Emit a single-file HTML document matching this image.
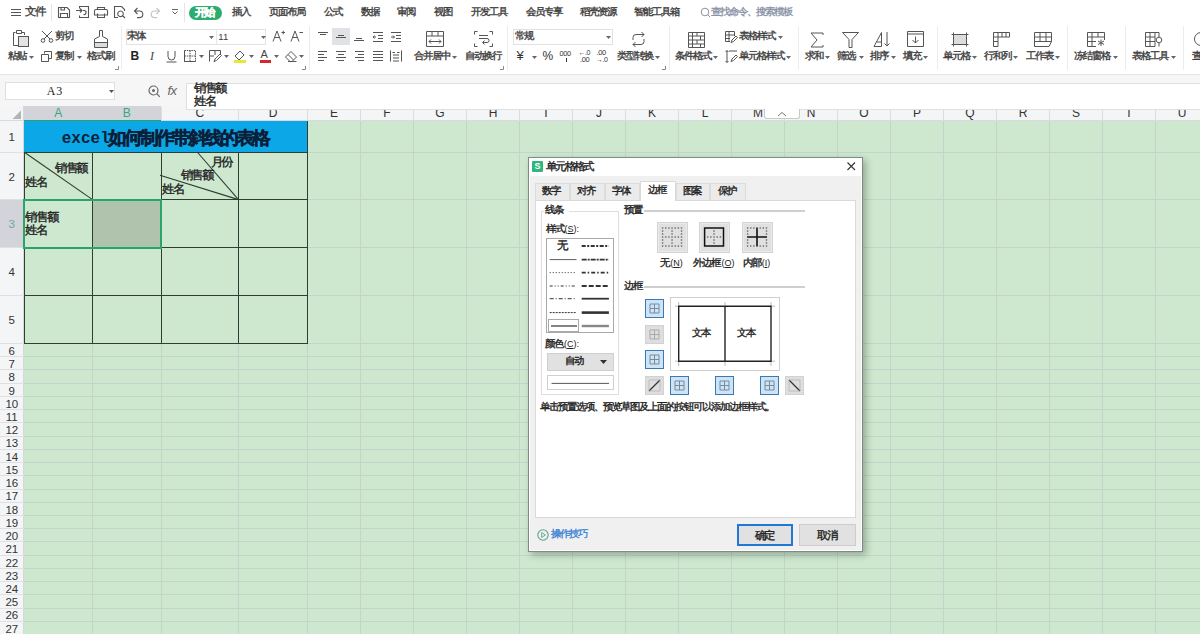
<!DOCTYPE html>
<html><head><meta charset="utf-8"><style>
html,body{margin:0;padding:0;}
body{width:1200px;height:634px;position:relative;overflow:hidden;background:#fff;font-family:"Liberation Sans",sans-serif;}
.a{position:absolute;}
.t{position:absolute;white-space:nowrap;}
svg.a{overflow:visible;}
.c{display:inline-block;width:1em;text-align:center;font-style:normal;-webkit-text-stroke:0.3px currentColor;transform:scale(1.2,1.15);font-family:"Liberation Sans",sans-serif;}
</style></head><body>
<div class="a" style="left:0px;top:0px;width:1200px;height:74px;background:#fff"></div>
<div class="a" style="left:11px;top:9px;width:10px;height:1.2px;background:#555"></div>
<div class="a" style="left:11px;top:12px;width:10px;height:1.2px;background:#555"></div>
<div class="a" style="left:11px;top:15px;width:10px;height:1.2px;background:#555"></div>
<div class="t" style="left:26px;top:6.33px;font-size:9.5px;line-height:12.35px;color:#3c3c3c;"><i class="c">文</i><i class="c">件</i></div>
<div class="a" style="left:50.5px;top:4px;width:1px;height:17px;background:#e4e4e4"></div>
<svg class="a" style="left:57px;top:6px;" width="14" height="13" viewBox="0 0 14 13" fill="none" stroke="#444" stroke-width="1"><path d="M1.5 1.5H10L12.5 4V11.5H1.5Z M3.5 11.5V7.5H10.5V11.5 M4 1.5V4H7.5V1.5" stroke="#555" stroke-width="1.1"/></svg>
<svg class="a" style="left:75px;top:5px;" width="15" height="14" viewBox="0 0 15 14" fill="none" stroke="#444" stroke-width="1"><path d="M4.5 3.5V1.5H13.5V12.5H4.5V10.5 M1 5.5H7 M5 3.5L7 5.5L5 7.5 M8.5 9.5a2 2 0 1 0 1-4H8" stroke="#555" stroke-width="1.1"/></svg>
<svg class="a" style="left:94px;top:6px;" width="14" height="13" viewBox="0 0 14 13" fill="none" stroke="#444" stroke-width="1"><path d="M3.5 3.5V1.5H10.5V3.5 M2 3.5H12a1.5 1.5 0 0 1 1.5 1.5V9H0.5V5A1.5 1.5 0 0 1 2 3.5Z M3.5 7.5V11.5H10.5V7.5" stroke="#555" stroke-width="1.1"/></svg>
<svg class="a" style="left:113px;top:5px;" width="14" height="14" viewBox="0 0 14 14" fill="none" stroke="#444" stroke-width="1"><path d="M8.5 1.5H1.5V12.5H5 M8.5 1.5L11.5 4.5V6 M7.5 6a2.8 2.8 0 1 0 0.01 0Z M9.5 10.5L12 13" stroke="#555" stroke-width="1.1"/></svg>
<svg class="a" style="left:131.5px;top:6px;" width="12" height="13" viewBox="0 0 12 13" fill="none" stroke="#444" stroke-width="1"><path d="M3 5H7.5a3.3 3.3 0 0 1 0 6.6H5 M5.5 2L2.5 5L5.5 8" stroke="#555" stroke-width="1.1"/></svg>
<svg class="a" style="left:150px;top:6px;" width="12" height="13" viewBox="0 0 12 13" fill="none" stroke="#444" stroke-width="1"><path d="M9 5H4.5a3.3 3.3 0 0 0 0 6.6H7 M6.5 2L9.5 5L6.5 8" stroke="#c4c4c4" stroke-width="1.1"/></svg>
<svg class="a" style="left:171px;top:8px;" width="8" height="8" viewBox="0 0 8 8" fill="none" stroke="#444" stroke-width="1"><path d="M1 1.5H7 M1.5 3.5L4 6L6.5 3.5" stroke="#666"/></svg>
<div class="a" style="left:184px;top:3px;width:1px;height:19px;background:#e4e4e4"></div>
<div class="a" style="left:188.5px;top:6.3px;width:33.5px;height:13.5px;background:#2bad70;border-radius:7px"></div>
<div class="t" style="left:145.20px;width:120px;text-align:center;top:6.83px;font-size:9.5px;line-height:12.35px;color:#fff;font-weight:bold"><i class="c">开</i><i class="c">始</i></div>
<div class="t" style="left:233px;top:7.15px;font-size:9px;line-height:11.7px;color:#3c3c3c;"><i class="c">插</i><i class="c">入</i></div>
<div class="t" style="left:270px;top:7.15px;font-size:9px;line-height:11.7px;color:#3c3c3c;"><i class="c">页</i><i class="c">面</i><i class="c">布</i><i class="c">局</i></div>
<div class="t" style="left:325px;top:7.15px;font-size:9px;line-height:11.7px;color:#3c3c3c;"><i class="c">公</i><i class="c">式</i></div>
<div class="t" style="left:361.5px;top:7.15px;font-size:9px;line-height:11.7px;color:#3c3c3c;"><i class="c">数</i><i class="c">据</i></div>
<div class="t" style="left:398px;top:7.15px;font-size:9px;line-height:11.7px;color:#3c3c3c;"><i class="c">审</i><i class="c">阅</i></div>
<div class="t" style="left:434.8px;top:7.15px;font-size:9px;line-height:11.7px;color:#3c3c3c;"><i class="c">视</i><i class="c">图</i></div>
<div class="t" style="left:471.7px;top:7.15px;font-size:9px;line-height:11.7px;color:#3c3c3c;"><i class="c">开</i><i class="c">发</i><i class="c">工</i><i class="c">具</i></div>
<div class="t" style="left:526.5px;top:7.15px;font-size:9px;line-height:11.7px;color:#3c3c3c;"><i class="c">会</i><i class="c">员</i><i class="c">专</i><i class="c">享</i></div>
<div class="t" style="left:580.5px;top:7.15px;font-size:9px;line-height:11.7px;color:#3c3c3c;"><i class="c">稻</i><i class="c">壳</i><i class="c">资</i><i class="c">源</i></div>
<div class="t" style="left:635.3px;top:7.15px;font-size:9px;line-height:11.7px;color:#3c3c3c;"><i class="c">智</i><i class="c">能</i><i class="c">工</i><i class="c">具</i><i class="c">箱</i></div>
<svg class="a" style="left:700px;top:7px;" width="11" height="12" viewBox="0 0 11 12" fill="none" stroke="#444" stroke-width="1"><circle cx="5" cy="5" r="3.8" stroke="#8a93a3"/><path d="M7.8 7.8L10 10" stroke="#8a93a3"/></svg>
<div class="t" style="left:711.6px;top:7.15px;font-size:9px;line-height:11.7px;color:#8a93a6;"><i class="c">查</i><i class="c">找</i><i class="c">命</i><i class="c">令</i><i class="c">、</i><i class="c">搜</i><i class="c">索</i><i class="c">模</i><i class="c">板</i></div>
<svg class="a" style="left:12px;top:29px;" width="19" height="19" viewBox="0 0 19 19" fill="none" stroke="#444" stroke-width="1"><path d="M3.5 3.5H1.5V16.5H6 M10 3.5H12.5V6 M4.5 1.5H9.5V4.5H4.5Z" stroke="#555"/><rect x="6.5" y="7.5" width="10" height="10" fill="#e3e3e3" stroke="#555"/></svg>
<div class="t" style="left:8.7px;top:51.45px;font-size:9px;line-height:11.7px;color:#3c3c3c;"><i class="c">粘</i><i class="c">贴</i></div>
<svg class="a" style="left:29px;top:55.5px" width="5" height="3" viewBox="0 0 5 3"><path d="M0 0H5L2.5 3Z" fill="#666"/></svg>
<svg class="a" style="left:40px;top:30px;" width="14" height="13" viewBox="0 0 14 13" fill="none" stroke="#444" stroke-width="1"><path d="M2 1L10 9 M12 1L4 9" stroke="#555"/><circle cx="3" cy="10.5" r="1.8" stroke="#555"/><circle cx="11" cy="10.5" r="1.8" stroke="#555"/></svg>
<div class="t" style="left:56px;top:31.45px;font-size:9px;line-height:11.7px;color:#3c3c3c;"><i class="c">剪</i><i class="c">切</i></div>
<svg class="a" style="left:40px;top:50px;" width="13" height="13" viewBox="0 0 13 13" fill="none" stroke="#444" stroke-width="1"><path d="M4.5 3.5V1.5H11.5V8.5H9 M1.5 4.5H8.5V11.5H1.5Z" stroke="#555"/></svg>
<div class="t" style="left:56px;top:51.15px;font-size:9px;line-height:11.7px;color:#3c3c3c;"><i class="c">复</i><i class="c">制</i></div>
<svg class="a" style="left:77px;top:55.5px" width="5" height="3" viewBox="0 0 5 3"><path d="M0 0H5L2.5 3Z" fill="#666"/></svg>
<svg class="a" style="left:93px;top:29px;" width="16" height="20" viewBox="0 0 16 20" fill="none" stroke="#444" stroke-width="1"><path d="M6.5 1.5H9.5V7.5L14.5 10V18.5H1.5V10L6.5 7.5Z" stroke="#555"/><rect x="2" y="13.5" width="12" height="4.5" fill="#dcdcdc" stroke="none"/><path d="M1.5 13.5H14.5" stroke="#555"/></svg>
<div class="t" style="left:88px;top:51.15px;font-size:9px;line-height:11.7px;color:#3c3c3c;"><i class="c">格</i><i class="c">式</i><i class="c">刷</i></div>
<svg class="a" style="left:115px;top:66px;" width="4" height="4" viewBox="0 0 4 4" fill="none" stroke="#444" stroke-width="1"><path d="M3.5 0V3.5H0" stroke="#888"/></svg>
<div class="a" style="left:121px;top:26px;width:1px;height:44px;background:#ececec"></div>
<div class="a" style="left:126.3px;top:28.7px;width:140px;height:16.6px;background:#fff;border:1px solid #e2e2e2;box-sizing:border-box"></div>
<div class="a" style="left:215.5px;top:29px;width:1px;height:16px;background:#e8e8e8"></div>
<div class="t" style="left:128.3px;top:31.15px;font-size:9px;line-height:11.7px;color:#3c3c3c;"><i class="c">宋</i><i class="c">体</i></div>
<svg class="a" style="left:209px;top:35.5px" width="5" height="3" viewBox="0 0 5 3"><path d="M0 0H5L2.5 3Z" fill="#666"/></svg>
<div class="t" style="left:218.3px;top:30.82px;font-size:9.5px;line-height:12.35px;color:#3c3c3c;">11</div>
<svg class="a" style="left:260.5px;top:35.5px" width="5" height="3" viewBox="0 0 5 3"><path d="M0 0H5L2.5 3Z" fill="#666"/></svg>
<svg class="a" style="left:272px;top:29px;" width="14" height="14" viewBox="0 0 14 14" fill="none" stroke="#444" stroke-width="1"><path d="M1 12.5L5 2L9 12.5 M2.5 8.5H7.5" stroke="#555"/><path d="M9.5 3.5H13 M11.25 1.75V5.25" stroke="#555"/></svg>
<svg class="a" style="left:290px;top:29px;" width="14" height="14" viewBox="0 0 14 14" fill="none" stroke="#444" stroke-width="1"><path d="M1 12.5L5 2L9 12.5 M2.5 8.5H7.5" stroke="#555"/><path d="M9.5 3.5H13" stroke="#555"/></svg>
<div class="t" style="left:130.5px;top:48.70px;font-size:12px;line-height:15.6px;color:#222;font-weight:bold">B</div>
<div class="t" style="left:150px;top:48.70px;font-size:12px;line-height:15.6px;color:#444;font-style:italic;font-family:'Liberation Serif',serif">I</div>
<svg class="a" style="left:165px;top:50px;" width="13" height="13" viewBox="0 0 13 13" fill="none" stroke="#444" stroke-width="1"><path d="M3 1V6.5a3.5 3.5 0 0 0 7 0V1 M1.5 12H11.5" stroke="#555"/></svg>
<svg class="a" style="left:183.5px;top:50px;" width="12" height="12" viewBox="0 0 12 12" fill="none" stroke="#444" stroke-width="1"><path d="M0.5 0.5H11.5V11.5H0.5Z M6 0.5V11.5 M0.5 6H11.5" stroke="#555" stroke-dasharray="1.5 0.8"/><path d="M0.5 11.5H11.5 M0.5 0.5V11.5" stroke="#555"/></svg>
<svg class="a" style="left:199px;top:54.5px" width="5" height="3" viewBox="0 0 5 3"><path d="M0 0H5L2.5 3Z" fill="#666"/></svg>
<svg class="a" style="left:208.5px;top:50px;" width="13" height="12" viewBox="0 0 13 12" fill="none" stroke="#444" stroke-width="1"><path d="M0.5 11.5V0.5H11.5V5 M0.5 6H5 M6 0.5V5" stroke="#555"/><path d="M5 11.5L6 9L11 4L12.5 5.5L7.5 10.5Z" stroke="#555"/></svg>
<svg class="a" style="left:224px;top:54.5px" width="5" height="3" viewBox="0 0 5 3"><path d="M0 0H5L2.5 3Z" fill="#666"/></svg>
<svg class="a" style="left:233px;top:49px;" width="14" height="15" viewBox="0 0 14 15" fill="none" stroke="#444" stroke-width="1"><path d="M2 7L7 2L11 6L6 11" stroke="#555"/><path d="M2 7L6 11" stroke="#555"/></svg>
<div class="a" style="left:234px;top:60px;width:12px;height:3px;background:#e8e63a"></div>
<svg class="a" style="left:249px;top:54.5px" width="5" height="3" viewBox="0 0 5 3"><path d="M0 0H5L2.5 3Z" fill="#666"/></svg>
<div class="t" style="left:260.5px;top:47.35px;font-size:11px;line-height:14.3px;color:#444;">A</div>
<div class="a" style="left:259.5px;top:60px;width:11px;height:2.5px;background:#d8262a"></div>
<svg class="a" style="left:274px;top:54.5px" width="5" height="3" viewBox="0 0 5 3"><path d="M0 0H5L2.5 3Z" fill="#666"/></svg>
<svg class="a" style="left:283.5px;top:50px;" width="14" height="12" viewBox="0 0 14 12" fill="none" stroke="#444" stroke-width="1"><path d="M1.5 7L7 1.5L12.5 7L8 11.5H6Z M4 4.5L9.5 10 M4 11.5H12.5" stroke="#555"/></svg>
<svg class="a" style="left:299px;top:54.5px" width="5" height="3" viewBox="0 0 5 3"><path d="M0 0H5L2.5 3Z" fill="#666"/></svg>
<svg class="a" style="left:302px;top:66px;" width="4" height="4" viewBox="0 0 4 4" fill="none" stroke="#444" stroke-width="1"><path d="M3.5 0V3.5H0" stroke="#888"/></svg>
<div class="a" style="left:309px;top:26px;width:1px;height:44px;background:#ececec"></div>
<div class="a" style="left:332px;top:28.3px;width:17.7px;height:17px;background:#e1e2e6"></div>
<svg class="a" style="left:316.5px;top:31px;" width="12" height="12" viewBox="0 0 12 12" fill="none" stroke="#444" stroke-width="1"><path d="M1 1.5H11" stroke="#555"/><path d="M3 3.5H9" stroke="#555"/></svg>
<svg class="a" style="left:334.8px;top:31px;" width="12" height="12" viewBox="0 0 12 12" fill="none" stroke="#444" stroke-width="1"><path d="M3 4.5H9" stroke="#555"/><path d="M1 6.5H11" stroke="#555"/></svg>
<svg class="a" style="left:353px;top:31px;" width="12" height="12" viewBox="0 0 12 12" fill="none" stroke="#444" stroke-width="1"><path d="M3 7.5H9" stroke="#555"/><path d="M1 9.5H11" stroke="#555"/></svg>
<svg class="a" style="left:371.5px;top:31px;" width="12" height="12" viewBox="0 0 12 12" fill="none" stroke="#444" stroke-width="1"><path d="M1 1.5H11 M6 4.5H11 M6 7.5H11 M1 10.5H11 M4 6H1 M2.5 4.5L1 6L2.5 7.5" stroke="#555"/></svg>
<svg class="a" style="left:390.3px;top:31px;" width="12" height="12" viewBox="0 0 12 12" fill="none" stroke="#444" stroke-width="1"><path d="M1 1.5H11 M6 4.5H11 M6 7.5H11 M1 10.5H11 M1 6H4.5 M3 4.5L4.5 6L3 7.5" stroke="#555"/></svg>
<svg class="a" style="left:316.5px;top:50px;" width="12" height="12" viewBox="0 0 12 12" fill="none" stroke="#444" stroke-width="1"><path d="M1 1.5H10" stroke="#555"/><path d="M1 4.5H7" stroke="#555"/><path d="M1 7.5H10" stroke="#555"/><path d="M1 10.5H7" stroke="#555"/></svg>
<svg class="a" style="left:334.8px;top:50px;" width="12" height="12" viewBox="0 0 12 12" fill="none" stroke="#444" stroke-width="1"><path d="M1 1.5H11" stroke="#555"/><path d="M3 4.5H9" stroke="#555"/><path d="M1 7.5H11" stroke="#555"/><path d="M3 10.5H9" stroke="#555"/></svg>
<svg class="a" style="left:353px;top:50px;" width="12" height="12" viewBox="0 0 12 12" fill="none" stroke="#444" stroke-width="1"><path d="M2 1.5H11" stroke="#555"/><path d="M5 4.5H11" stroke="#555"/><path d="M2 7.5H11" stroke="#555"/><path d="M5 10.5H11" stroke="#555"/></svg>
<svg class="a" style="left:371.5px;top:50px;" width="12" height="12" viewBox="0 0 12 12" fill="none" stroke="#444" stroke-width="1"><path d="M1 1.5H11" stroke="#555"/><path d="M1 4.5H11" stroke="#555"/><path d="M1 7.5H11" stroke="#555"/><path d="M1 10.5H11" stroke="#555"/></svg>
<svg class="a" style="left:390.3px;top:50px;" width="12" height="12" viewBox="0 0 12 12" fill="none" stroke="#444" stroke-width="1"><path d="M0.5 0.5V11.5 M11.5 0.5V11.5 M3 5H9 M3 8H9 M3 11H9 M2.5 2.5H5 M9.5 2.5H7" stroke="#555"/></svg>
<svg class="a" style="left:426px;top:31px;" width="18" height="16" viewBox="0 0 18 16" fill="none" stroke="#444" stroke-width="1"><path d="M0.5 0.5H17.5V15.5H0.5Z M0.5 5H17.5 M6 0.5V5 M12 0.5V5 M3 10.5H15 M5 8.5L3 10.5L5 12.5 M13 8.5L15 10.5L13 12.5" stroke="#555"/></svg>
<div class="t" style="left:415px;top:51.15px;font-size:9px;line-height:11.7px;color:#3c3c3c;"><i class="c">合</i><i class="c">并</i><i class="c">居</i><i class="c">中</i></div>
<svg class="a" style="left:452px;top:55.5px" width="5" height="3" viewBox="0 0 5 3"><path d="M0 0H5L2.5 3Z" fill="#666"/></svg>
<svg class="a" style="left:473.5px;top:31px;" width="19" height="16" viewBox="0 0 19 16" fill="none" stroke="#444" stroke-width="1"><path d="M3.5 0.5H0.5V3.5 M15.5 0.5H18.5V3.5 M0.5 12.5V15.5H3.5 M18.5 12.5V15.5H15.5 M5 4.5H14 M5 7.5H13a2 2 0 0 1 0 4H9 M10.5 9.5L8.5 11.5L10.5 13.5" stroke="#555"/></svg>
<div class="t" style="left:465.8px;top:51.15px;font-size:9px;line-height:11.7px;color:#3c3c3c;"><i class="c">自</i><i class="c">动</i><i class="c">换</i><i class="c">行</i></div>
<svg class="a" style="left:500px;top:66px;" width="4" height="4" viewBox="0 0 4 4" fill="none" stroke="#444" stroke-width="1"><path d="M3.5 0V3.5H0" stroke="#888"/></svg>
<div class="a" style="left:507px;top:26px;width:1px;height:44px;background:#ececec"></div>
<div class="a" style="left:512.5px;top:28.7px;width:100px;height:16.6px;background:#fff;border:1px solid #e2e2e2;box-sizing:border-box"></div>
<div class="t" style="left:515.8px;top:31.15px;font-size:9px;line-height:11.7px;color:#3c3c3c;"><i class="c">常</i><i class="c">规</i></div>
<svg class="a" style="left:606px;top:35.5px" width="5" height="3" viewBox="0 0 5 3"><path d="M0 0H5L2.5 3Z" fill="#666"/></svg>
<div class="t" style="left:516.5px;top:48.05px;font-size:13px;line-height:16.9px;color:#333;">¥</div>
<svg class="a" style="left:531.5px;top:55.5px" width="5" height="3" viewBox="0 0 5 3"><path d="M0 0H5L2.5 3Z" fill="#666"/></svg>
<div class="t" style="left:542.5px;top:48.70px;font-size:12px;line-height:15.6px;color:#333;">%</div>
<div class="t" style="left:559.5px;top:48.62px;font-size:7.5px;line-height:9.75px;color:#333;letter-spacing:-0.4px">000</div>
<div class="a" style="left:565.5px;top:58px;width:1.4px;height:3.5px;background:#333"></div>
<div class="t" style="left:578.5px;top:47.95px;font-size:7px;line-height:9.1px;color:#333;letter-spacing:-0.5px">←.0</div>
<div class="t" style="left:580px;top:54.62px;font-size:7.5px;line-height:9.75px;color:#333;letter-spacing:-0.4px">.00</div>
<div class="t" style="left:596.5px;top:47.62px;font-size:7.5px;line-height:9.75px;color:#333;letter-spacing:-0.4px">.00</div>
<div class="t" style="left:596px;top:54.95px;font-size:7px;line-height:9.1px;color:#333;letter-spacing:-0.5px">→.0</div>
<svg class="a" style="left:631px;top:31px;" width="15" height="17" viewBox="0 0 15 17" fill="none" stroke="#444" stroke-width="1"><path d="M2 9V6.5a3 3 0 0 1 3-3H13 M10.5 1L13 3.5L10.5 6 M13 8V10.5a3 3 0 0 1-3 3H2 M4.5 11L2 13.5L4.5 16" stroke="#555"/></svg>
<div class="t" style="left:617.5px;top:51.15px;font-size:9px;line-height:11.7px;color:#3c3c3c;"><i class="c">类</i><i class="c">型</i><i class="c">转</i><i class="c">换</i></div>
<svg class="a" style="left:655px;top:55.5px" width="5" height="3" viewBox="0 0 5 3"><path d="M0 0H5L2.5 3Z" fill="#666"/></svg>
<svg class="a" style="left:662px;top:66px;" width="4" height="4" viewBox="0 0 4 4" fill="none" stroke="#444" stroke-width="1"><path d="M3.5 0V3.5H0" stroke="#888"/></svg>
<div class="a" style="left:669px;top:26px;width:1px;height:44px;background:#ececec"></div>
<svg class="a" style="left:687.5px;top:31.5px;" width="17" height="16" viewBox="0 0 17 16" fill="none" stroke="#444" stroke-width="1"><path d="M0.5 0.5H16.5V15.5H0.5Z M0.5 4H16.5 M0.5 8H16.5 M0.5 12H16.5 M4.5 0.5V15.5 M9 0.5V4 M9 8V12 M12.5 4V8 M12.5 12V15.5" stroke="#555"/></svg>
<div class="t" style="left:675.8px;top:51.15px;font-size:9px;line-height:11.7px;color:#3c3c3c;"><i class="c">条</i><i class="c">件</i><i class="c">格</i><i class="c">式</i></div>
<svg class="a" style="left:713px;top:55.5px" width="5" height="3" viewBox="0 0 5 3"><path d="M0 0H5L2.5 3Z" fill="#666"/></svg>
<svg class="a" style="left:724.5px;top:31px;" width="13" height="13" viewBox="0 0 13 13" fill="none" stroke="#444" stroke-width="1"><path d="M0.5 0.5H9.5V5 M0.5 0.5V10.5H5 M0.5 4H9.5 M0.5 7.5H5 M4 0.5V10.5" stroke="#555"/><path d="M6 11.5L7 9L11 5L12.5 6.5L8.5 10.5Z" stroke="#555"/></svg>
<div class="t" style="left:740px;top:31.15px;font-size:9px;line-height:11.7px;color:#3c3c3c;"><i class="c">表</i><i class="c">格</i><i class="c">样</i><i class="c">式</i></div>
<svg class="a" style="left:778px;top:35.5px" width="5" height="3" viewBox="0 0 5 3"><path d="M0 0H5L2.5 3Z" fill="#666"/></svg>
<svg class="a" style="left:724.5px;top:50px;" width="13" height="13" viewBox="0 0 13 13" fill="none" stroke="#444" stroke-width="1"><path d="M2 0.5V12.5 M0.5 2L2 0.5L3.5 2 M0.5 11L2 12.5L3.5 11 M4 1H12" stroke="#555"/><path d="M6 11.5L7 9L11 5L12.5 6.5L8.5 10.5Z" stroke="#555"/></svg>
<div class="t" style="left:740px;top:50.65px;font-size:9px;line-height:11.7px;color:#3c3c3c;"><i class="c">单</i><i class="c">元</i><i class="c">格</i><i class="c">样</i><i class="c">式</i></div>
<svg class="a" style="left:786px;top:55.5px" width="5" height="3" viewBox="0 0 5 3"><path d="M0 0H5L2.5 3Z" fill="#666"/></svg>
<div class="a" style="left:797.5px;top:26px;width:1px;height:44px;background:#ececec"></div>
<svg class="a" style="left:809.5px;top:31.5px;" width="14" height="16" viewBox="0 0 14 16" fill="none" stroke="#444" stroke-width="1"><path d="M13 3V1H1L7 8L1 15H13V13" stroke="#555"/></svg>
<div class="t" style="left:805.8px;top:51.15px;font-size:9px;line-height:11.7px;color:#3c3c3c;"><i class="c">求</i><i class="c">和</i></div>
<svg class="a" style="left:825px;top:55.5px" width="5" height="3" viewBox="0 0 5 3"><path d="M0 0H5L2.5 3Z" fill="#666"/></svg>
<svg class="a" style="left:841.5px;top:31.5px;" width="17" height="16" viewBox="0 0 17 16" fill="none" stroke="#444" stroke-width="1"><path d="M0.5 0.5H16.5L10 7.5V15.5H7V7.5Z" stroke="#555"/></svg>
<div class="t" style="left:838.3px;top:51.15px;font-size:9px;line-height:11.7px;color:#3c3c3c;"><i class="c">筛</i><i class="c">选</i></div>
<svg class="a" style="left:859px;top:55.5px" width="5" height="3" viewBox="0 0 5 3"><path d="M0 0H5L2.5 3Z" fill="#666"/></svg>
<svg class="a" style="left:873px;top:31px;" width="19" height="17" viewBox="0 0 19 17" fill="none" stroke="#444" stroke-width="1"><path d="M1 15.5L8.5 1.5V15.5Z M3.5 11H8.5" stroke="#555"/><path d="M14 1V15 M11.5 12.5L14 15L16.5 12.5" stroke="#555"/></svg>
<div class="t" style="left:870.8px;top:51.15px;font-size:9px;line-height:11.7px;color:#3c3c3c;"><i class="c">排</i><i class="c">序</i></div>
<svg class="a" style="left:891px;top:55.5px" width="5" height="3" viewBox="0 0 5 3"><path d="M0 0H5L2.5 3Z" fill="#666"/></svg>
<svg class="a" style="left:906.5px;top:31px;" width="17" height="16" viewBox="0 0 17 16" fill="none" stroke="#444" stroke-width="1"><path d="M0.5 0.5H16.5V15.5H0.5Z M0.5 3H16.5 M8.5 5.5V12 M5.5 9L8.5 12L11.5 9" stroke="#555"/></svg>
<div class="t" style="left:904px;top:51.15px;font-size:9px;line-height:11.7px;color:#3c3c3c;"><i class="c">填</i><i class="c">充</i></div>
<svg class="a" style="left:923px;top:55.5px" width="5" height="3" viewBox="0 0 5 3"><path d="M0 0H5L2.5 3Z" fill="#666"/></svg>
<div class="a" style="left:936.5px;top:26px;width:1px;height:44px;background:#ececec"></div>
<svg class="a" style="left:950.5px;top:31.5px;" width="18" height="15" viewBox="0 0 18 15" fill="none" stroke="#444" stroke-width="1"><rect x="3" y="3" width="12" height="9" fill="#dcdcdc" stroke="none"/><path d="M0.5 2.5H17.5 M0.5 12.5H17.5 M2.5 0.5V14.5 M15.5 0.5V14.5" stroke="#555"/></svg>
<div class="t" style="left:944px;top:51.15px;font-size:9px;line-height:11.7px;color:#3c3c3c;"><i class="c">单</i><i class="c">元</i><i class="c">格</i></div>
<svg class="a" style="left:972px;top:55.5px" width="5" height="3" viewBox="0 0 5 3"><path d="M0 0H5L2.5 3Z" fill="#666"/></svg>
<svg class="a" style="left:993px;top:31.5px;" width="17" height="15" viewBox="0 0 17 15" fill="none" stroke="#444" stroke-width="1"><path d="M0.5 0.5H16.5V5H5V14.5H0.5Z M0.5 5H5 M0.5 9.5H5 M5 0.5V5 M9 0.5V5 M13 0.5V5" stroke="#555"/></svg>
<div class="t" style="left:985px;top:51.15px;font-size:9px;line-height:11.7px;color:#3c3c3c;"><i class="c">行</i><i class="c">和</i><i class="c">列</i></div>
<svg class="a" style="left:1013px;top:55.5px" width="5" height="3" viewBox="0 0 5 3"><path d="M0 0H5L2.5 3Z" fill="#666"/></svg>
<svg class="a" style="left:1033.5px;top:31.5px;" width="18" height="15" viewBox="0 0 18 15" fill="none" stroke="#444" stroke-width="1"><path d="M0.5 0.5H17.5V9.5L15 14.5H0.5Z M0.5 5H17.5 M0.5 9.5H17.5 M6 0.5V9.5 M12 0.5V9.5" stroke="#555"/></svg>
<div class="t" style="left:1026.6px;top:51.15px;font-size:9px;line-height:11.7px;color:#3c3c3c;"><i class="c">工</i><i class="c">作</i><i class="c">表</i></div>
<svg class="a" style="left:1055px;top:55.5px" width="5" height="3" viewBox="0 0 5 3"><path d="M0 0H5L2.5 3Z" fill="#666"/></svg>
<div class="a" style="left:1067px;top:26px;width:1px;height:44px;background:#ececec"></div>
<svg class="a" style="left:1086.5px;top:31.5px;" width="18" height="15" viewBox="0 0 18 15" fill="none" stroke="#444" stroke-width="1"><path d="M0.5 0.5H17.5V8 M0.5 0.5V14.5H9 M0.5 5H17.5 M0.5 9.5H9 M5 0.5V14.5 M11 0.5V5" stroke="#555"/><path d="M14 7.5V14 M11 9L17 12.5 M17 9L11 12.5" stroke="#555"/></svg>
<div class="t" style="left:1075px;top:51.15px;font-size:9px;line-height:11.7px;color:#3c3c3c;"><i class="c">冻</i><i class="c">结</i><i class="c">窗</i><i class="c">格</i></div>
<svg class="a" style="left:1112.5px;top:55.5px" width="5" height="3" viewBox="0 0 5 3"><path d="M0 0H5L2.5 3Z" fill="#666"/></svg>
<div class="a" style="left:1124.8px;top:26px;width:1px;height:44px;background:#ececec"></div>
<svg class="a" style="left:1145px;top:31.5px;" width="18" height="15" viewBox="0 0 18 15" fill="none" stroke="#444" stroke-width="1"><path d="M0.5 0.5H14V5 M0.5 0.5V14.5H10 M0.5 5H10 M0.5 9.5H10 M5 0.5V14.5 M10 0.5V14.5" stroke="#555"/><circle cx="14" cy="8" r="2.8" stroke="#555"/><path d="M14 10.8V14.5" stroke="#555"/></svg>
<div class="t" style="left:1133.2px;top:51.15px;font-size:9px;line-height:11.7px;color:#3c3c3c;"><i class="c">表</i><i class="c">格</i><i class="c">工</i><i class="c">具</i></div>
<svg class="a" style="left:1171px;top:55.5px" width="5" height="3" viewBox="0 0 5 3"><path d="M0 0H5L2.5 3Z" fill="#666"/></svg>
<div class="a" style="left:1183.4px;top:26px;width:1px;height:44px;background:#ececec"></div>
<svg class="a" style="left:1192px;top:31px;" width="10" height="16" viewBox="0 0 10 16" fill="none" stroke="#444" stroke-width="1"><circle cx="9" cy="8" r="6.5" stroke="#555"/></svg>
<div class="t" style="left:1193px;top:51.15px;font-size:9px;line-height:11.7px;color:#3c3c3c;"><i class="c">查</i></div>
<div class="a" style="left:0px;top:73.5px;width:1200px;height:1px;background:#e3e3e3"></div>
<div class="a" style="left:0px;top:74.5px;width:1200px;height:35.5px;background:#f6f6f7"></div>
<div class="a" style="left:5px;top:82px;width:109.5px;height:17.5px;background:#fff;border:1px solid #e0e0e0;box-sizing:border-box"></div>
<div class="t" style="left:25.00px;width:60px;text-align:center;top:83.70px;font-size:12px;line-height:15.6px;color:#222;font-family:'Liberation Serif',serif;letter-spacing:1px">A3</div>
<svg class="a" style="left:108.5px;top:89.5px" width="5" height="3" viewBox="0 0 5 3"><path d="M0 0H5L2.5 3Z" fill="#555"/></svg>
<svg class="a" style="left:148px;top:84.5px;" width="13" height="13" viewBox="0 0 13 13" fill="none" stroke="#444" stroke-width="1"><circle cx="5.5" cy="5.5" r="4.5" stroke="#666" stroke-width="1.2"/><circle cx="5.5" cy="5.5" r="1.5" fill="#666" stroke="none"/><path d="M8.7 8.7L11.8 11.8" stroke="#666" stroke-width="1.2"/></svg>
<div class="t" style="left:167.5px;top:82.55px;font-size:13px;line-height:16.9px;color:#666;font-style:italic;letter-spacing:-0.5px">fx</div>
<div class="a" style="left:0px;top:106px;width:1200px;height:15px;background:#f4f5f7"></div>
<div class="a" style="left:24px;top:106px;width:137px;height:15px;background:#d3d4da"></div>
<div class="a" style="left:0px;top:120.3px;width:1200px;height:0.7px;background:#d9dade"></div>
<div class="a" style="left:24px;top:119.5px;width:137px;height:1.5px;background:#2aa56a"></div>
<svg class="a" style="left:12px;top:110px;" width="10" height="10" viewBox="0 0 10 10" fill="none" stroke="#444" stroke-width="1"><path d="M9 0.5V9H0.5Z" fill="#b4b4b4" stroke="none"/></svg>
<div class="t" style="left:38.25px;width:40px;text-align:center;top:105.50px;font-size:12px;line-height:15.6px;color:#3aa57a;">A</div>
<div class="t" style="left:106.75px;width:40px;text-align:center;top:105.50px;font-size:12px;line-height:15.6px;color:#3aa57a;">B</div>
<div class="a" style="left:160.5px;top:107px;width:1px;height:14px;background:#dcdde1"></div>
<div class="t" style="left:179.75px;width:40px;text-align:center;top:105.50px;font-size:12px;line-height:15.6px;color:#333;">C</div>
<div class="a" style="left:238.0px;top:107px;width:1px;height:14px;background:#dcdde1"></div>
<div class="t" style="left:253.00px;width:40px;text-align:center;top:105.50px;font-size:12px;line-height:15.6px;color:#333;">D</div>
<div class="a" style="left:307.0px;top:107px;width:1px;height:14px;background:#dcdde1"></div>
<div class="t" style="left:314.00px;width:40px;text-align:center;top:105.50px;font-size:12px;line-height:15.6px;color:#333;">E</div>
<div class="a" style="left:360.0px;top:107px;width:1px;height:14px;background:#dcdde1"></div>
<div class="t" style="left:367.00px;width:40px;text-align:center;top:105.50px;font-size:12px;line-height:15.6px;color:#333;">F</div>
<div class="a" style="left:413.0px;top:107px;width:1px;height:14px;background:#dcdde1"></div>
<div class="t" style="left:420.00px;width:40px;text-align:center;top:105.50px;font-size:12px;line-height:15.6px;color:#333;">G</div>
<div class="a" style="left:466.0px;top:107px;width:1px;height:14px;background:#dcdde1"></div>
<div class="t" style="left:473.00px;width:40px;text-align:center;top:105.50px;font-size:12px;line-height:15.6px;color:#333;">H</div>
<div class="a" style="left:519.0px;top:107px;width:1px;height:14px;background:#dcdde1"></div>
<div class="t" style="left:526.00px;width:40px;text-align:center;top:105.50px;font-size:12px;line-height:15.6px;color:#333;">I</div>
<div class="a" style="left:572.0px;top:107px;width:1px;height:14px;background:#dcdde1"></div>
<div class="t" style="left:579.00px;width:40px;text-align:center;top:105.50px;font-size:12px;line-height:15.6px;color:#333;">J</div>
<div class="a" style="left:625.0px;top:107px;width:1px;height:14px;background:#dcdde1"></div>
<div class="t" style="left:632.00px;width:40px;text-align:center;top:105.50px;font-size:12px;line-height:15.6px;color:#333;">K</div>
<div class="a" style="left:678.0px;top:107px;width:1px;height:14px;background:#dcdde1"></div>
<div class="t" style="left:685.00px;width:40px;text-align:center;top:105.50px;font-size:12px;line-height:15.6px;color:#333;">L</div>
<div class="a" style="left:731.0px;top:107px;width:1px;height:14px;background:#dcdde1"></div>
<div class="t" style="left:738.00px;width:40px;text-align:center;top:105.50px;font-size:12px;line-height:15.6px;color:#333;">M</div>
<div class="a" style="left:784.0px;top:107px;width:1px;height:14px;background:#dcdde1"></div>
<div class="t" style="left:791.00px;width:40px;text-align:center;top:105.50px;font-size:12px;line-height:15.6px;color:#333;">N</div>
<div class="a" style="left:837.0px;top:107px;width:1px;height:14px;background:#dcdde1"></div>
<div class="t" style="left:844.00px;width:40px;text-align:center;top:105.50px;font-size:12px;line-height:15.6px;color:#333;">O</div>
<div class="a" style="left:890.0px;top:107px;width:1px;height:14px;background:#dcdde1"></div>
<div class="t" style="left:897.00px;width:40px;text-align:center;top:105.50px;font-size:12px;line-height:15.6px;color:#333;">P</div>
<div class="a" style="left:943.0px;top:107px;width:1px;height:14px;background:#dcdde1"></div>
<div class="t" style="left:950.00px;width:40px;text-align:center;top:105.50px;font-size:12px;line-height:15.6px;color:#333;">Q</div>
<div class="a" style="left:996.0px;top:107px;width:1px;height:14px;background:#dcdde1"></div>
<div class="t" style="left:1003.00px;width:40px;text-align:center;top:105.50px;font-size:12px;line-height:15.6px;color:#333;">R</div>
<div class="a" style="left:1049.0px;top:107px;width:1px;height:14px;background:#dcdde1"></div>
<div class="t" style="left:1056.00px;width:40px;text-align:center;top:105.50px;font-size:12px;line-height:15.6px;color:#333;">S</div>
<div class="a" style="left:1102.0px;top:107px;width:1px;height:14px;background:#dcdde1"></div>
<div class="t" style="left:1109.00px;width:40px;text-align:center;top:105.50px;font-size:12px;line-height:15.6px;color:#333;">T</div>
<div class="a" style="left:1155.0px;top:107px;width:1px;height:14px;background:#dcdde1"></div>
<div class="t" style="left:1162.00px;width:40px;text-align:center;top:105.50px;font-size:12px;line-height:15.6px;color:#333;">U</div>
<div class="a" style="left:0px;top:121px;width:24px;height:513px;background:#f4f5f7"></div>
<div class="a" style="left:0px;top:199.6px;width:24px;height:47.7px;background:#d3d4da"></div>
<div class="a" style="left:23.3px;top:106px;width:0.8px;height:528px;background:#d6d7db"></div>
<div class="a" style="left:0px;top:151.5px;width:24px;height:1px;background:#dfe0e4"></div>
<div class="t" style="left:-0.20px;width:24px;text-align:center;top:130.22px;font-size:11.5px;line-height:14.95px;color:#333;">1</div>
<div class="a" style="left:0px;top:199.1px;width:24px;height:1px;background:#dfe0e4"></div>
<div class="t" style="left:-0.20px;width:24px;text-align:center;top:169.53px;font-size:11.5px;line-height:14.95px;color:#333;">2</div>
<div class="a" style="left:0px;top:246.8px;width:24px;height:1px;background:#dfe0e4"></div>
<div class="t" style="left:-0.20px;width:24px;text-align:center;top:217.17px;font-size:11.5px;line-height:14.95px;color:#6aa8a0;">3</div>
<div class="a" style="left:0px;top:294.7px;width:24px;height:1px;background:#dfe0e4"></div>
<div class="t" style="left:-0.20px;width:24px;text-align:center;top:264.97px;font-size:11.5px;line-height:14.95px;color:#333;">4</div>
<div class="a" style="left:0px;top:343.0px;width:24px;height:1px;background:#dfe0e4"></div>
<div class="t" style="left:-0.20px;width:24px;text-align:center;top:313.07px;font-size:11.5px;line-height:14.95px;color:#333;">5</div>
<div class="a" style="left:0px;top:356.23px;width:24px;height:1px;background:#dfe0e4"></div>
<div class="t" style="left:-0.20px;width:24px;text-align:center;top:343.84px;font-size:11.5px;line-height:14.95px;color:#333;">6</div>
<div class="a" style="left:0px;top:369.46px;width:24px;height:1px;background:#dfe0e4"></div>
<div class="t" style="left:-0.20px;width:24px;text-align:center;top:357.07px;font-size:11.5px;line-height:14.95px;color:#333;">7</div>
<div class="a" style="left:0px;top:382.69px;width:24px;height:1px;background:#dfe0e4"></div>
<div class="t" style="left:-0.20px;width:24px;text-align:center;top:370.30px;font-size:11.5px;line-height:14.95px;color:#333;">8</div>
<div class="a" style="left:0px;top:395.92px;width:24px;height:1px;background:#dfe0e4"></div>
<div class="t" style="left:-0.20px;width:24px;text-align:center;top:383.53px;font-size:11.5px;line-height:14.95px;color:#333;">9</div>
<div class="a" style="left:0px;top:409.15px;width:24px;height:1px;background:#dfe0e4"></div>
<div class="t" style="left:-0.20px;width:24px;text-align:center;top:396.76px;font-size:11.5px;line-height:14.95px;color:#333;">10</div>
<div class="a" style="left:0px;top:422.38px;width:24px;height:1px;background:#dfe0e4"></div>
<div class="t" style="left:-0.20px;width:24px;text-align:center;top:409.99px;font-size:11.5px;line-height:14.95px;color:#333;">11</div>
<div class="a" style="left:0px;top:435.61px;width:24px;height:1px;background:#dfe0e4"></div>
<div class="t" style="left:-0.20px;width:24px;text-align:center;top:423.22px;font-size:11.5px;line-height:14.95px;color:#333;">12</div>
<div class="a" style="left:0px;top:448.84px;width:24px;height:1px;background:#dfe0e4"></div>
<div class="t" style="left:-0.20px;width:24px;text-align:center;top:436.45px;font-size:11.5px;line-height:14.95px;color:#333;">13</div>
<div class="a" style="left:0px;top:462.07px;width:24px;height:1px;background:#dfe0e4"></div>
<div class="t" style="left:-0.20px;width:24px;text-align:center;top:449.68px;font-size:11.5px;line-height:14.95px;color:#333;">14</div>
<div class="a" style="left:0px;top:475.3px;width:24px;height:1px;background:#dfe0e4"></div>
<div class="t" style="left:-0.20px;width:24px;text-align:center;top:462.91px;font-size:11.5px;line-height:14.95px;color:#333;">15</div>
<div class="a" style="left:0px;top:488.53px;width:24px;height:1px;background:#dfe0e4"></div>
<div class="t" style="left:-0.20px;width:24px;text-align:center;top:476.14px;font-size:11.5px;line-height:14.95px;color:#333;">16</div>
<div class="a" style="left:0px;top:501.76px;width:24px;height:1px;background:#dfe0e4"></div>
<div class="t" style="left:-0.20px;width:24px;text-align:center;top:489.37px;font-size:11.5px;line-height:14.95px;color:#333;">17</div>
<div class="a" style="left:0px;top:514.99px;width:24px;height:1px;background:#dfe0e4"></div>
<div class="t" style="left:-0.20px;width:24px;text-align:center;top:502.60px;font-size:11.5px;line-height:14.95px;color:#333;">18</div>
<div class="a" style="left:0px;top:528.22px;width:24px;height:1px;background:#dfe0e4"></div>
<div class="t" style="left:-0.20px;width:24px;text-align:center;top:515.83px;font-size:11.5px;line-height:14.95px;color:#333;">19</div>
<div class="a" style="left:0px;top:541.45px;width:24px;height:1px;background:#dfe0e4"></div>
<div class="t" style="left:-0.20px;width:24px;text-align:center;top:529.06px;font-size:11.5px;line-height:14.95px;color:#333;">20</div>
<div class="a" style="left:0px;top:554.68px;width:24px;height:1px;background:#dfe0e4"></div>
<div class="t" style="left:-0.20px;width:24px;text-align:center;top:542.29px;font-size:11.5px;line-height:14.95px;color:#333;">21</div>
<div class="a" style="left:0px;top:567.91px;width:24px;height:1px;background:#dfe0e4"></div>
<div class="t" style="left:-0.20px;width:24px;text-align:center;top:555.52px;font-size:11.5px;line-height:14.95px;color:#333;">22</div>
<div class="a" style="left:0px;top:581.14px;width:24px;height:1px;background:#dfe0e4"></div>
<div class="t" style="left:-0.20px;width:24px;text-align:center;top:568.75px;font-size:11.5px;line-height:14.95px;color:#333;">23</div>
<div class="a" style="left:0px;top:594.37px;width:24px;height:1px;background:#dfe0e4"></div>
<div class="t" style="left:-0.20px;width:24px;text-align:center;top:581.98px;font-size:11.5px;line-height:14.95px;color:#333;">24</div>
<div class="a" style="left:0px;top:607.6px;width:24px;height:1px;background:#dfe0e4"></div>
<div class="t" style="left:-0.20px;width:24px;text-align:center;top:595.21px;font-size:11.5px;line-height:14.95px;color:#333;">25</div>
<div class="a" style="left:0px;top:620.83px;width:24px;height:1px;background:#dfe0e4"></div>
<div class="t" style="left:-0.20px;width:24px;text-align:center;top:608.44px;font-size:11.5px;line-height:14.95px;color:#333;">26</div>
<div class="a" style="left:0px;top:634.06px;width:24px;height:1px;background:#dfe0e4"></div>
<div class="t" style="left:-0.20px;width:24px;text-align:center;top:621.67px;font-size:11.5px;line-height:14.95px;color:#333;">27</div>
<div class="a" style="left:24px;top:121px;width:1176px;height:513px;background:#cde8cf"></div>
<div class="a" style="left:92.0px;top:121px;width:1px;height:513px;background:#c0d6c8"></div>
<div class="a" style="left:160.5px;top:121px;width:1px;height:513px;background:#c0d6c8"></div>
<div class="a" style="left:238.0px;top:121px;width:1px;height:513px;background:#c0d6c8"></div>
<div class="a" style="left:307.0px;top:121px;width:1px;height:513px;background:#c0d6c8"></div>
<div class="a" style="left:360.0px;top:121px;width:1px;height:513px;background:#c0d6c8"></div>
<div class="a" style="left:413.0px;top:121px;width:1px;height:513px;background:#c0d6c8"></div>
<div class="a" style="left:466.0px;top:121px;width:1px;height:513px;background:#c0d6c8"></div>
<div class="a" style="left:519.0px;top:121px;width:1px;height:513px;background:#c0d6c8"></div>
<div class="a" style="left:572.0px;top:121px;width:1px;height:513px;background:#c0d6c8"></div>
<div class="a" style="left:625.0px;top:121px;width:1px;height:513px;background:#c0d6c8"></div>
<div class="a" style="left:678.0px;top:121px;width:1px;height:513px;background:#c0d6c8"></div>
<div class="a" style="left:731.0px;top:121px;width:1px;height:513px;background:#c0d6c8"></div>
<div class="a" style="left:784.0px;top:121px;width:1px;height:513px;background:#c0d6c8"></div>
<div class="a" style="left:837.0px;top:121px;width:1px;height:513px;background:#c0d6c8"></div>
<div class="a" style="left:890.0px;top:121px;width:1px;height:513px;background:#c0d6c8"></div>
<div class="a" style="left:943.0px;top:121px;width:1px;height:513px;background:#c0d6c8"></div>
<div class="a" style="left:996.0px;top:121px;width:1px;height:513px;background:#c0d6c8"></div>
<div class="a" style="left:1049.0px;top:121px;width:1px;height:513px;background:#c0d6c8"></div>
<div class="a" style="left:1102.0px;top:121px;width:1px;height:513px;background:#c0d6c8"></div>
<div class="a" style="left:1155.0px;top:121px;width:1px;height:513px;background:#c0d6c8"></div>
<div class="a" style="left:1208.0px;top:121px;width:1px;height:513px;background:#c0d6c8"></div>
<div class="a" style="left:24px;top:151.5px;width:1176px;height:1px;background:#c0d6c8"></div>
<div class="a" style="left:24px;top:199.1px;width:1176px;height:1px;background:#c0d6c8"></div>
<div class="a" style="left:24px;top:246.8px;width:1176px;height:1px;background:#c0d6c8"></div>
<div class="a" style="left:24px;top:294.7px;width:1176px;height:1px;background:#c0d6c8"></div>
<div class="a" style="left:24px;top:343.0px;width:1176px;height:1px;background:#c0d6c8"></div>
<div class="a" style="left:24px;top:356.23px;width:1176px;height:1px;background:#c0d6c8"></div>
<div class="a" style="left:24px;top:369.46px;width:1176px;height:1px;background:#c0d6c8"></div>
<div class="a" style="left:24px;top:382.69px;width:1176px;height:1px;background:#c0d6c8"></div>
<div class="a" style="left:24px;top:395.92px;width:1176px;height:1px;background:#c0d6c8"></div>
<div class="a" style="left:24px;top:409.15px;width:1176px;height:1px;background:#c0d6c8"></div>
<div class="a" style="left:24px;top:422.38px;width:1176px;height:1px;background:#c0d6c8"></div>
<div class="a" style="left:24px;top:435.61px;width:1176px;height:1px;background:#c0d6c8"></div>
<div class="a" style="left:24px;top:448.84px;width:1176px;height:1px;background:#c0d6c8"></div>
<div class="a" style="left:24px;top:462.07px;width:1176px;height:1px;background:#c0d6c8"></div>
<div class="a" style="left:24px;top:475.3px;width:1176px;height:1px;background:#c0d6c8"></div>
<div class="a" style="left:24px;top:488.53px;width:1176px;height:1px;background:#c0d6c8"></div>
<div class="a" style="left:24px;top:501.76px;width:1176px;height:1px;background:#c0d6c8"></div>
<div class="a" style="left:24px;top:514.99px;width:1176px;height:1px;background:#c0d6c8"></div>
<div class="a" style="left:24px;top:528.22px;width:1176px;height:1px;background:#c0d6c8"></div>
<div class="a" style="left:24px;top:541.45px;width:1176px;height:1px;background:#c0d6c8"></div>
<div class="a" style="left:24px;top:554.68px;width:1176px;height:1px;background:#c0d6c8"></div>
<div class="a" style="left:24px;top:567.91px;width:1176px;height:1px;background:#c0d6c8"></div>
<div class="a" style="left:24px;top:581.14px;width:1176px;height:1px;background:#c0d6c8"></div>
<div class="a" style="left:24px;top:594.37px;width:1176px;height:1px;background:#c0d6c8"></div>
<div class="a" style="left:24px;top:607.6px;width:1176px;height:1px;background:#c0d6c8"></div>
<div class="a" style="left:24px;top:620.83px;width:1176px;height:1px;background:#c0d6c8"></div>
<div class="a" style="left:24px;top:634.06px;width:1176px;height:1px;background:#c0d6c8"></div>
<div class="a" style="left:24px;top:121px;width:283.5px;height:31px;background:#0ba7e7"></div>
<div class="t" style="left:24px;top:129px;width:283.5px;text-align:center;font-size:16px;line-height:18px;color:#0b1f3a;font-weight:bold;font-family:'Liberation Serif',serif"><span style='font-family:"Liberation Mono",monospace'>excel</span><i class="c">如</i><i class="c">何</i><i class="c">制</i><i class="c">作</i><i class="c">带</i><i class="c">斜</i><i class="c">线</i><i class="c">的</i><i class="c">表</i><i class="c">格</i></div>
<div class="a" style="left:92.5px;top:199.6px;width:68.5px;height:47.7px;background:#b0c3ad"></div>
<div class="a" style="left:23.5px;top:151.5px;width:1px;height:192.5px;background:#2e3e32"></div>
<div class="a" style="left:92.0px;top:151.5px;width:1px;height:192.5px;background:#2e3e32"></div>
<div class="a" style="left:160.5px;top:151.5px;width:1px;height:192.5px;background:#2e3e32"></div>
<div class="a" style="left:238.0px;top:151.5px;width:1px;height:192.5px;background:#2e3e32"></div>
<div class="a" style="left:307.0px;top:151.5px;width:1px;height:192.5px;background:#2e3e32"></div>
<div class="a" style="left:307px;top:121px;width:1px;height:31px;background:#2e3e32"></div>
<div class="a" style="left:23.5px;top:151.5px;width:284.5px;height:1px;background:#2e3e32"></div>
<div class="a" style="left:23.5px;top:199.1px;width:284.5px;height:1px;background:#2e3e32"></div>
<div class="a" style="left:23.5px;top:246.8px;width:284.5px;height:1px;background:#2e3e32"></div>
<div class="a" style="left:23.5px;top:294.7px;width:284.5px;height:1px;background:#2e3e32"></div>
<div class="a" style="left:23.5px;top:343.0px;width:284.5px;height:1px;background:#2e3e32"></div>
<svg class="a" style="left:0;top:0" width="1200" height="400" viewBox="0 0 1200 400"><g stroke="#2e3e32" stroke-width="1.1"><path d="M24 152L92.5 199.6"/><path d="M197.2 152L238.5 199.6"/><path d="M160 175.3L238.5 199.6"/></g></svg>
<div class="t" style="left:56px;top:162.34px;font-size:10.7px;line-height:13.91px;color:#222;"><i class="c">销</i><i class="c">售</i><i class="c">额</i></div>
<div class="t" style="left:26.3px;top:176.04px;font-size:10.7px;line-height:13.91px;color:#222;"><i class="c">姓</i><i class="c">名</i></div>
<div class="t" style="left:26.3px;top:210.84px;font-size:10.7px;line-height:13.91px;color:#222;"><i class="c">销</i><i class="c">售</i><i class="c">额</i></div>
<div class="t" style="left:26.3px;top:223.84px;font-size:10.7px;line-height:13.91px;color:#222;"><i class="c">姓</i><i class="c">名</i></div>
<div class="t" style="left:211.5px;top:156.04px;font-size:10.7px;line-height:13.91px;color:#222;"><i class="c">月</i><i class="c">份</i></div>
<div class="t" style="left:181.8px;top:169.34px;font-size:10.7px;line-height:13.91px;color:#222;"><i class="c">销</i><i class="c">售</i><i class="c">额</i></div>
<div class="t" style="left:163.3px;top:182.64px;font-size:10.7px;line-height:13.91px;color:#222;"><i class="c">姓</i><i class="c">名</i></div>
<div class="a" style="left:23px;top:198.8px;width:139px;height:50px;border:2px solid #2ba46b;box-sizing:border-box"></div>
<div class="a" style="left:185.5px;top:82.5px;width:1014.5px;height:27.5px;background:#fff;border:1px solid #e0e0e0;border-right:none;box-sizing:border-box"></div>
<div class="t" style="left:195px;top:82.34px;font-size:10.7px;line-height:13.91px;color:#222;"><i class="c">销</i><i class="c">售</i><i class="c">额</i></div>
<div class="t" style="left:195px;top:94.55px;font-size:10.7px;line-height:13.91px;color:#222;"><i class="c">姓</i><i class="c">名</i></div>
<div class="a" style="left:764px;top:109px;width:36px;height:10px;background:#fff;border:1px solid #c9c9c9;border-top:none;border-radius:0 0 3px 3px;box-sizing:border-box"></div>
<svg class="a" style="left:777px;top:111px;" width="10" height="6" viewBox="0 0 10 6" fill="none" stroke="#444" stroke-width="1"><path d="M1 5L5 1.5L9 5" stroke="#777"/></svg>
<div class="a" style="left:528.3px;top:157.3px;width:334.80000000000007px;height:395.09999999999997px;background:#f0f0f0;border:1px solid #7f8a80;box-sizing:border-box;box-shadow:inset 1px 1px 0 #fff, inset -1px -1px 0 #fff, 3px 3px 7px rgba(0,0,0,0.28)"></div>
<div class="a" style="left:529.3px;top:158.3px;width:332.80000000000007px;height:18px;background:#fff"></div>
<div class="a" style="left:531.7px;top:160.5px;width:11.5px;height:11.5px;background:#30b57a;border-radius:1px"></div>
<div class="t" style="left:531.40px;width:12px;text-align:center;top:160.75px;font-size:9px;line-height:11.7px;color:#fff;font-weight:bold">S</div>
<div class="t" style="left:547px;top:160.66px;font-size:9.3px;line-height:12.09px;color:#222;"><i class="c">单</i><i class="c">元</i><i class="c">格</i><i class="c">格</i><i class="c">式</i></div>
<svg class="a" style="left:846.8px;top:162px;" width="8.5" height="8.5" viewBox="0 0 8.5 8.5" fill="none" stroke="#444" stroke-width="1"><path d="M0.5 0.5L8 8 M8 0.5L0.5 8" stroke="#333" stroke-width="1.1"/></svg>
<div class="a" style="left:535.3px;top:183.3px;width:34.30000000000007px;height:17px;background:#ebebeb;border:1px solid #dcdcdc;border-bottom:none;box-sizing:border-box"></div>
<div class="t" style="left:532.45px;width:40px;text-align:center;top:185.65px;font-size:9px;line-height:11.7px;color:#222;"><i class="c">数</i><i class="c">字</i></div>
<div class="a" style="left:569.6px;top:183.3px;width:35.10000000000002px;height:17px;background:#ebebeb;border:1px solid #dcdcdc;border-bottom:none;box-sizing:border-box"></div>
<div class="t" style="left:567.15px;width:40px;text-align:center;top:185.65px;font-size:9px;line-height:11.7px;color:#222;"><i class="c">对</i><i class="c">齐</i></div>
<div class="a" style="left:604.7px;top:183.3px;width:35.299999999999955px;height:17px;background:#ebebeb;border:1px solid #dcdcdc;border-bottom:none;box-sizing:border-box"></div>
<div class="t" style="left:602.35px;width:40px;text-align:center;top:185.65px;font-size:9px;line-height:11.7px;color:#222;"><i class="c">字</i><i class="c">体</i></div>
<div class="a" style="left:640px;top:181.3px;width:36px;height:19.7px;background:#fff;border:1px solid #d9d9d9;border-bottom:none;box-sizing:border-box"></div>
<div class="t" style="left:638.00px;width:40px;text-align:center;top:184.95px;font-size:9px;line-height:11.7px;color:#222;"><i class="c">边</i><i class="c">框</i></div>
<div class="a" style="left:676px;top:183.3px;width:34px;height:17px;background:#ebebeb;border:1px solid #dcdcdc;border-bottom:none;box-sizing:border-box"></div>
<div class="t" style="left:673.00px;width:40px;text-align:center;top:185.65px;font-size:9px;line-height:11.7px;color:#222;"><i class="c">图</i><i class="c">案</i></div>
<div class="a" style="left:710px;top:183.3px;width:35.799999999999955px;height:17px;background:#ebebeb;border:1px solid #dcdcdc;border-bottom:none;box-sizing:border-box"></div>
<div class="t" style="left:707.90px;width:40px;text-align:center;top:185.65px;font-size:9px;line-height:11.7px;color:#222;"><i class="c">保</i><i class="c">护</i></div>
<div class="a" style="left:534.5px;top:200px;width:321px;height:317.5px;background:#fff;border:1px solid #d9d9d9;box-sizing:border-box"></div>
<div class="a" style="left:641px;top:199px;width:34px;height:2px;background:#fff"></div>
<div class="a" style="left:540.7px;top:211.4px;width:78.7px;height:183.6px;border:1px solid #dedede;box-sizing:border-box"></div>
<div class="a" style="left:544px;top:206px;width:25px;height:10px;background:#fff"></div>
<div class="t" style="left:546px;top:205.15px;font-size:9px;line-height:11.7px;color:#222;"><i class="c">线</i><i class="c">条</i></div>
<div class="t" style="left:546.6px;top:224.15px;font-size:9px;line-height:11.7px;color:#222;"><i class="c">样</i><i class="c">式</i>(<u>S</u>):</div>
<div class="a" style="left:546.2px;top:238px;width:67.4px;height:95px;background:#fff;border:1px solid #a9a9a9;box-sizing:border-box"></div>
<div class="t" style="left:553.00px;width:20px;text-align:center;top:239.82px;font-size:9.5px;line-height:12.35px;color:#222;"><i class="c">无</i></div>
<div class="a" style="left:548px;top:319px;width:31px;height:13px;border:1px solid #a9a9a9;box-sizing:border-box"></div>
<svg class="a" style="left:0;top:0" width="1" height="1" overflow="visible"><path d="M549.7 259.6H576.5" stroke="#333" stroke-width="0.8"/></svg>
<svg class="a" style="left:0;top:0" width="1" height="1" overflow="visible"><path d="M549.7 272.6H576.5" stroke="#333" stroke-width="1" stroke-dasharray="1 2"/></svg>
<svg class="a" style="left:0;top:0" width="1" height="1" overflow="visible"><path d="M549.7 286H576.5" stroke="#333" stroke-width="1" stroke-dasharray="3 2 1 2 1 2"/></svg>
<svg class="a" style="left:0;top:0" width="1" height="1" overflow="visible"><path d="M549.7 298.7H576.5" stroke="#333" stroke-width="1" stroke-dasharray="4 2 1 2"/></svg>
<svg class="a" style="left:0;top:0" width="1" height="1" overflow="visible"><path d="M549.7 312.6H576.5" stroke="#333" stroke-width="1" stroke-dasharray="2 1"/></svg>
<svg class="a" style="left:0;top:0" width="1" height="1" overflow="visible"><path d="M551 326H577" stroke="#333" stroke-width="1.2"/></svg>
<svg class="a" style="left:0;top:0" width="1" height="1" overflow="visible"><path d="M581.7 246H608.9" stroke="#333" stroke-width="1.8" stroke-dasharray="4 1.5 2 1.5"/></svg>
<svg class="a" style="left:0;top:0" width="1" height="1" overflow="visible"><path d="M581.7 259.6H608.9" stroke="#333" stroke-width="1.8" stroke-dasharray="5 1 2 1"/></svg>
<svg class="a" style="left:0;top:0" width="1" height="1" overflow="visible"><path d="M581.7 272.6H608.9" stroke="#333" stroke-width="1.8" stroke-dasharray="4 2 1.5 2"/></svg>
<svg class="a" style="left:0;top:0" width="1" height="1" overflow="visible"><path d="M581.7 286H608.9" stroke="#333" stroke-width="1.8" stroke-dasharray="5 2"/></svg>
<svg class="a" style="left:0;top:0" width="1" height="1" overflow="visible"><path d="M581.7 298.7H608.9" stroke="#333" stroke-width="1.8"/></svg>
<svg class="a" style="left:0;top:0" width="1" height="1" overflow="visible"><path d="M581.7 312.6H608.9" stroke="#333" stroke-width="2.6"/></svg>
<svg class="a" style="left:0;top:0" width="1" height="1" overflow="visible"><path d="M581.7 326H608.9" stroke="#888" stroke-width="2.4"/></svg>
<div class="t" style="left:546px;top:339.35px;font-size:9px;line-height:11.7px;color:#222;"><i class="c">颜</i><i class="c">色</i>(<u>C</u>):</div>
<div class="a" style="left:546.5px;top:352.8px;width:67.4px;height:17.9px;background:#e1e1e1;border:1px solid #cfcfcf;box-sizing:border-box"></div>
<div class="t" style="left:560.00px;width:30px;text-align:center;top:355.85px;font-size:9px;line-height:11.7px;color:#222;"><i class="c">自</i><i class="c">动</i></div>
<svg class="a" style="left:600px;top:360px" width="7" height="4" viewBox="0 0 7 4"><path d="M0 0H7L3.5 4Z" fill="#333"/></svg>
<div class="a" style="left:546.5px;top:375.4px;width:67.4px;height:14.9px;background:#fff;border:1px solid #cfcfcf;box-sizing:border-box"></div>
<svg class="a" style="left:0;top:0" width="1" height="1" overflow="visible"><path d="M551.5 383.4H609" stroke="#444" stroke-width="0.9"/></svg>
<div class="t" style="left:624.7px;top:205.15px;font-size:9px;line-height:11.7px;color:#222;"><i class="c">预</i><i class="c">置</i></div>
<div class="a" style="left:644px;top:210.3px;width:161px;height:1.5px;background:#cfcfcf"></div>
<div class="a" style="left:657px;top:222px;width:31px;height:30.5px;background:#e0e0e0;border:1px solid #d3d3d3;box-shadow:inset 0 0 0 1px #eaeaea;box-sizing:border-box"></div>
<svg class="a" style="left:657px;top:222px;" width="31" height="31" viewBox="0 0 31 31" fill="none" stroke="#444" stroke-width="1"><rect x="4.90" y="5.30" width="1.4" height="1.4" fill="#666" stroke="none"/><rect x="8.05" y="5.30" width="1.4" height="1.4" fill="#666" stroke="none"/><rect x="11.20" y="5.30" width="1.4" height="1.4" fill="#666" stroke="none"/><rect x="14.35" y="5.30" width="1.4" height="1.4" fill="#666" stroke="none"/><rect x="17.50" y="5.30" width="1.4" height="1.4" fill="#666" stroke="none"/><rect x="20.65" y="5.30" width="1.4" height="1.4" fill="#666" stroke="none"/><rect x="23.80" y="5.30" width="1.4" height="1.4" fill="#666" stroke="none"/><rect x="4.90" y="8.30" width="1.4" height="1.4" fill="#666" stroke="none"/><rect x="14.35" y="8.30" width="1.4" height="1.4" fill="#666" stroke="none"/><rect x="23.80" y="8.30" width="1.4" height="1.4" fill="#666" stroke="none"/><rect x="4.90" y="11.30" width="1.4" height="1.4" fill="#666" stroke="none"/><rect x="14.35" y="11.30" width="1.4" height="1.4" fill="#666" stroke="none"/><rect x="23.80" y="11.30" width="1.4" height="1.4" fill="#666" stroke="none"/><rect x="4.90" y="14.30" width="1.4" height="1.4" fill="#666" stroke="none"/><rect x="8.05" y="14.30" width="1.4" height="1.4" fill="#666" stroke="none"/><rect x="11.20" y="14.30" width="1.4" height="1.4" fill="#666" stroke="none"/><rect x="14.35" y="14.30" width="1.4" height="1.4" fill="#666" stroke="none"/><rect x="17.50" y="14.30" width="1.4" height="1.4" fill="#666" stroke="none"/><rect x="20.65" y="14.30" width="1.4" height="1.4" fill="#666" stroke="none"/><rect x="23.80" y="14.30" width="1.4" height="1.4" fill="#666" stroke="none"/><rect x="4.90" y="17.30" width="1.4" height="1.4" fill="#666" stroke="none"/><rect x="14.35" y="17.30" width="1.4" height="1.4" fill="#666" stroke="none"/><rect x="23.80" y="17.30" width="1.4" height="1.4" fill="#666" stroke="none"/><rect x="4.90" y="20.30" width="1.4" height="1.4" fill="#666" stroke="none"/><rect x="14.35" y="20.30" width="1.4" height="1.4" fill="#666" stroke="none"/><rect x="23.80" y="20.30" width="1.4" height="1.4" fill="#666" stroke="none"/><rect x="4.90" y="23.30" width="1.4" height="1.4" fill="#666" stroke="none"/><rect x="8.05" y="23.30" width="1.4" height="1.4" fill="#666" stroke="none"/><rect x="11.20" y="23.30" width="1.4" height="1.4" fill="#666" stroke="none"/><rect x="14.35" y="23.30" width="1.4" height="1.4" fill="#666" stroke="none"/><rect x="17.50" y="23.30" width="1.4" height="1.4" fill="#666" stroke="none"/><rect x="20.65" y="23.30" width="1.4" height="1.4" fill="#666" stroke="none"/><rect x="23.80" y="23.30" width="1.4" height="1.4" fill="#666" stroke="none"/></svg>
<div class="a" style="left:699px;top:222px;width:31px;height:30.5px;background:#e0e0e0;border:1px solid #d3d3d3;box-shadow:inset 0 0 0 1px #eaeaea;box-sizing:border-box"></div>
<svg class="a" style="left:699px;top:222px;" width="31" height="31" viewBox="0 0 31 31" fill="none" stroke="#444" stroke-width="1"><rect x="14.35" y="8.30" width="1.4" height="1.4" fill="#666" stroke="none"/><rect x="14.35" y="11.30" width="1.4" height="1.4" fill="#666" stroke="none"/><rect x="8.05" y="14.30" width="1.4" height="1.4" fill="#666" stroke="none"/><rect x="11.20" y="14.30" width="1.4" height="1.4" fill="#666" stroke="none"/><rect x="14.35" y="14.30" width="1.4" height="1.4" fill="#666" stroke="none"/><rect x="17.50" y="14.30" width="1.4" height="1.4" fill="#666" stroke="none"/><rect x="20.65" y="14.30" width="1.4" height="1.4" fill="#666" stroke="none"/><rect x="14.35" y="17.30" width="1.4" height="1.4" fill="#666" stroke="none"/><rect x="14.35" y="20.30" width="1.4" height="1.4" fill="#666" stroke="none"/><path d="M5.6 6.0H24.5V24.0H5.6Z" stroke="#111" stroke-width="1.5"/></svg>
<div class="a" style="left:742px;top:222px;width:31px;height:30.5px;background:#e0e0e0;border:1px solid #d3d3d3;box-shadow:inset 0 0 0 1px #eaeaea;box-sizing:border-box"></div>
<svg class="a" style="left:742px;top:222px;" width="31" height="31" viewBox="0 0 31 31" fill="none" stroke="#444" stroke-width="1"><rect x="4.90" y="5.30" width="1.4" height="1.4" fill="#666" stroke="none"/><rect x="8.05" y="5.30" width="1.4" height="1.4" fill="#666" stroke="none"/><rect x="11.20" y="5.30" width="1.4" height="1.4" fill="#666" stroke="none"/><rect x="17.50" y="5.30" width="1.4" height="1.4" fill="#666" stroke="none"/><rect x="20.65" y="5.30" width="1.4" height="1.4" fill="#666" stroke="none"/><rect x="23.80" y="5.30" width="1.4" height="1.4" fill="#666" stroke="none"/><rect x="4.90" y="8.30" width="1.4" height="1.4" fill="#666" stroke="none"/><rect x="23.80" y="8.30" width="1.4" height="1.4" fill="#666" stroke="none"/><rect x="4.90" y="11.30" width="1.4" height="1.4" fill="#666" stroke="none"/><rect x="23.80" y="11.30" width="1.4" height="1.4" fill="#666" stroke="none"/><rect x="4.90" y="17.30" width="1.4" height="1.4" fill="#666" stroke="none"/><rect x="23.80" y="17.30" width="1.4" height="1.4" fill="#666" stroke="none"/><rect x="4.90" y="20.30" width="1.4" height="1.4" fill="#666" stroke="none"/><rect x="23.80" y="20.30" width="1.4" height="1.4" fill="#666" stroke="none"/><rect x="4.90" y="23.30" width="1.4" height="1.4" fill="#666" stroke="none"/><rect x="8.05" y="23.30" width="1.4" height="1.4" fill="#666" stroke="none"/><rect x="11.20" y="23.30" width="1.4" height="1.4" fill="#666" stroke="none"/><rect x="17.50" y="23.30" width="1.4" height="1.4" fill="#666" stroke="none"/><rect x="20.65" y="23.30" width="1.4" height="1.4" fill="#666" stroke="none"/><rect x="23.80" y="23.30" width="1.4" height="1.4" fill="#666" stroke="none"/><path d="M15.0 5.5V24.5 M5.1 15.0H25.0" stroke="#111" stroke-width="1.6"/></svg>
<div class="t" style="left:652.00px;width:40px;text-align:center;top:258.15px;font-size:9px;line-height:11.7px;color:#222;"><i class="c">无</i>(<u>N</u>)</div>
<div class="t" style="left:684.50px;width:60px;text-align:center;top:258.15px;font-size:9px;line-height:11.7px;color:#222;"><i class="c">外</i><i class="c">边</i><i class="c">框</i>(<u>O</u>)</div>
<div class="t" style="left:737.00px;width:40px;text-align:center;top:258.15px;font-size:9px;line-height:11.7px;color:#222;"><i class="c">内</i><i class="c">部</i>(<u>I</u>)</div>
<div class="t" style="left:624.7px;top:281.15px;font-size:9px;line-height:11.7px;color:#222;"><i class="c">边</i><i class="c">框</i></div>
<div class="a" style="left:644px;top:286.3px;width:161px;height:1.5px;background:#cfcfcf"></div>
<div class="a" style="left:645px;top:299px;width:19px;height:19px;background:#cce4f7;border:1.3px solid #3c78b4;box-sizing:border-box"></div>
<svg class="a" style="left:645px;top:299px;" width="19" height="19" viewBox="0 0 19 19" fill="none" stroke="#444" stroke-width="1"><path d="M5 5H14V14H5Z M9.5 5V14 M5 9.5H14" stroke="#7a8a9a" stroke-width="1"/></svg>
<div class="a" style="left:645px;top:324.7px;width:19px;height:19px;background:#dedede;border:1px solid #d2d2d2;box-sizing:border-box"></div>
<svg class="a" style="left:645px;top:324.7px;" width="19" height="19" viewBox="0 0 19 19" fill="none" stroke="#444" stroke-width="1"><path d="M5 5H14V14H5Z M9.5 5V14 M5 9.5H14" stroke="#aaa" stroke-width="1"/></svg>
<div class="a" style="left:645px;top:350.4px;width:19px;height:19px;background:#cce4f7;border:1.3px solid #3c78b4;box-sizing:border-box"></div>
<svg class="a" style="left:645px;top:350.4px;" width="19" height="19" viewBox="0 0 19 19" fill="none" stroke="#444" stroke-width="1"><path d="M5 5H14V14H5Z M9.5 5V14 M5 9.5H14" stroke="#7a8a9a" stroke-width="1"/></svg>
<div class="a" style="left:645px;top:376.2px;width:19px;height:19px;background:#dedede;border:1px solid #d2d2d2;box-sizing:border-box"></div>
<svg class="a" style="left:645px;top:376.2px;" width="19" height="19" viewBox="0 0 19 19" fill="none" stroke="#444" stroke-width="1"><path d="M4 15L15 4" stroke="#333" stroke-width="1.2"/><path d="M4 4H15V15H4Z" stroke="#aaa" stroke-width="0.6"/></svg>
<div class="a" style="left:670px;top:376.2px;width:19px;height:19px;background:#cce4f7;border:1.3px solid #3c78b4;box-sizing:border-box"></div>
<svg class="a" style="left:670px;top:376.2px;" width="19" height="19" viewBox="0 0 19 19" fill="none" stroke="#444" stroke-width="1"><path d="M5 5H14V14H5Z M9.5 5V14 M5 9.5H14" stroke="#7a8a9a" stroke-width="1"/></svg>
<div class="a" style="left:715px;top:376.2px;width:19px;height:19px;background:#cce4f7;border:1.3px solid #3c78b4;box-sizing:border-box"></div>
<svg class="a" style="left:715px;top:376.2px;" width="19" height="19" viewBox="0 0 19 19" fill="none" stroke="#444" stroke-width="1"><path d="M5 5H14V14H5Z M9.5 5V14 M5 9.5H14" stroke="#7a8a9a" stroke-width="1"/></svg>
<div class="a" style="left:760px;top:376.2px;width:19px;height:19px;background:#cce4f7;border:1.3px solid #3c78b4;box-sizing:border-box"></div>
<svg class="a" style="left:760px;top:376.2px;" width="19" height="19" viewBox="0 0 19 19" fill="none" stroke="#444" stroke-width="1"><path d="M5 5H14V14H5Z M9.5 5V14 M5 9.5H14" stroke="#7a8a9a" stroke-width="1"/></svg>
<div class="a" style="left:785px;top:376.2px;width:19px;height:19px;background:#dedede;border:1px solid #d2d2d2;box-sizing:border-box"></div>
<svg class="a" style="left:785px;top:376.2px;" width="19" height="19" viewBox="0 0 19 19" fill="none" stroke="#444" stroke-width="1"><path d="M4 4L15 15" stroke="#333" stroke-width="1.2"/><path d="M4 4H15V15H4Z" stroke="#aaa" stroke-width="0.6"/></svg>
<div class="a" style="left:669.5px;top:297.3px;width:110px;height:73.4px;background:#fff;border:1px solid #cfcfcf;box-sizing:border-box"></div>
<svg class="a" style="left:669.5px;top:297.3px" width="110" height="74" viewBox="0 0 110 74" fill="none"><g stroke="#aaa" stroke-width="0.8"><path d="M5 9.2H9 M101 9.2H105 M5 64.2H9 M101 64.2H105 M8.7 5V9 M8.7 64V69 M101 5V9 M101 64V69 M55 5V9 M55 64V69"/></g><g stroke="#222" stroke-width="1.4"><path d="M8.7 9.2H101V64.2H8.7Z M55 9.2V64.2"/></g></svg>
<div class="t" style="left:687.00px;width:30px;text-align:center;top:328.15px;font-size:9px;line-height:11.7px;color:#222;"><i class="c">文</i><i class="c">本</i></div>
<div class="t" style="left:732.00px;width:30px;text-align:center;top:328.15px;font-size:9px;line-height:11.7px;color:#222;"><i class="c">文</i><i class="c">本</i></div>
<div class="t" style="left:540.5px;top:401.55px;font-size:9px;line-height:11.7px;color:#222;"><i class="c">单</i><i class="c">击</i><i class="c">预</i><i class="c">置</i><i class="c">选</i><i class="c">项</i><i class="c">、</i><i class="c">预</i><i class="c">览</i><i class="c">草</i><i class="c">图</i><i class="c">及</i><i class="c">上</i><i class="c">面</i><i class="c">的</i><i class="c">按</i><i class="c">钮</i><i class="c">可</i><i class="c">以</i><i class="c">添</i><i class="c">加</i><i class="c">边</i><i class="c">框</i><i class="c">样</i><i class="c">式</i><i class="c">。</i></div>
<svg class="a" style="left:536.5px;top:529px;" width="12" height="12" viewBox="0 0 12 12" fill="none" stroke="#444" stroke-width="1"><circle cx="6" cy="6" r="5.2" stroke="#5aa58a" stroke-width="1.1"/><path d="M4.7 3.6V8.4L8.4 6Z" stroke="#5aa58a" stroke-width="0.9"/></svg>
<div class="t" style="left:551.8px;top:529.15px;font-size:9px;line-height:11.7px;color:#3b82d6;"><i class="c">操</i><i class="c">作</i><i class="c">技</i><i class="c">巧</i></div>
<div class="a" style="left:737.3px;top:524.4px;width:56.1px;height:21.2px;background:#e1e1e1;border:2px solid #1f78d2;box-sizing:border-box"></div>
<div class="t" style="left:745.30px;width:40px;text-align:center;top:529.62px;font-size:9.5px;line-height:12.35px;color:#222;"><i class="c">确</i><i class="c">定</i></div>
<div class="a" style="left:799.4px;top:524.4px;width:56.5px;height:21.2px;background:#e1e1e1;border:1px solid #cdcdcd;box-sizing:border-box"></div>
<div class="t" style="left:807.70px;width:40px;text-align:center;top:529.62px;font-size:9.5px;line-height:12.35px;color:#222;"><i class="c">取</i><i class="c">消</i></div>
</body></html>
